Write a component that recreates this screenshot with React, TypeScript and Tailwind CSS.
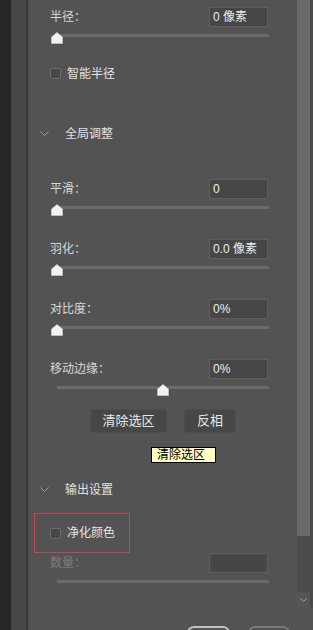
import React from 'react';

const font = { fontFamily: '"Liberation Sans", "Noto Sans CJK SC", sans-serif' };

const Thumb: React.FC = () => (
  <svg width="12" height="12" viewBox="0 0 12 12">
    <path d="M6 0.5 L11.5 5 L11.5 11.5 L0.5 11.5 L0.5 5 Z" fill="#f2f2f2" stroke="#d0d0d0" strokeWidth="0.6" strokeLinejoin="round" />
  </svg>
);

// track runs 212px; thumb offset taken from the value
const Slider: React.FC<{ pct?: number; showThumb?: boolean }> = ({ pct = 0, showThumb = true }) => (
  <div className="relative h-[12px] ml-[1px] mr-[-1px] mt-[5px] shrink-0">
    <div className="absolute left-[6px] right-0 top-[2px] h-[3px] bg-[#6b6b6b]" />
    {showThumb && (
      <div className="absolute top-0 w-[12px] h-[12px]" style={{ left: `${pct * 212}px` }}>
        <Thumb />
      </div>
    )}
  </div>
);

const ValueRow: React.FC<{ label: string; value: string; className?: string; disabled?: boolean }> = ({
  label,
  value,
  className = '',
  disabled,
}) => (
  <div className={`flex items-center justify-between h-[20px] shrink-0 ${className}`}>
    <span className={`text-[12px] leading-none ${disabled ? 'text-[#7c7c7c]' : 'text-[#d8d8d8]'}`}>{label}</span>
    <div
      className={`w-[59px] h-[20px] border flex items-center pl-[3px] text-[12px] leading-none ${
        disabled ? 'border-[#5c5c5c] bg-[#494949] p-[2px]' : 'border-[#5f5f5f] bg-[#464646] text-[#ececec]'
      }`}
    >
      {disabled ? <div className="w-full h-full bg-[#454545]" /> : value}
    </div>
  </div>
);

const Checkbox: React.FC<{ label: string }> = ({ label }) => (
  <div className="flex items-center h-[11px] gap-[6px]">
    <div className="w-[11px] h-[11px] rounded-[2px] border border-[#6c6c6c] bg-[#474747]" />
    <span className="text-[12px] leading-none text-[#e4e4e4]">{label}</span>
  </div>
);

const Section: React.FC<{ title: string; className?: string }> = ({ title, className = '' }) => (
  <div className={`flex items-center h-[16px] ml-[-10px] shrink-0 ${className}`}>
    <svg width="9" height="6" viewBox="0 0 9 6" className="mr-[16px]">
      <polyline points="0.5,0.5 4.5,4.5 8.5,0.5" fill="none" stroke="#9c9c9c" strokeWidth="1" />
    </svg>
    <span className="text-[12px] leading-none text-[#e2e2e2]">{title}</span>
  </div>
);

export default function App() {
  return (
    <div className="flex h-[630px] w-[313px] overflow-hidden bg-[#535353]" style={font}>
      <div className="w-[11px] bg-[#262626]" />
      <div className="w-[15px] bg-[#474747]" />
      <div className="w-[2px] bg-[#393939]" />
      <div className="flex-1 flex flex-col bg-[#535353] border-l border-[#4c4c4c] overflow-hidden">
        <div className="flex h-[608px] shrink-0">
          {/* scrolling content */}
          <div className="flex-1 flex flex-col pl-[21px] pr-[29px] pt-[7px]">
            <ValueRow label="半径：" value="0 像素" />
            <Slider />
            <div className="mt-[24px]">
              <Checkbox label="智能半径" />
            </div>

            <Section title="全局调整" className="mt-[47px]" />

            <ValueRow label="平滑：" value="0" className="mt-[37px]" />
            <Slider />
            <ValueRow label="羽化：" value="0.0 像素" className="mt-[23px]" />
            <Slider />
            <ValueRow label="对比度：" value="0%" className="mt-[23px]" />
            <Slider />
            <ValueRow label="移动边缘：" value="0%" className="mt-[23px]" />
            <Slider pct={0.5} />

            <div className="relative flex mt-[13px] ml-[40px] gap-[17px] shrink-0">
              <button className="w-[77px] h-[24px] rounded-[3px] border border-[#4d4d4d] bg-[#474747] text-[13px] text-[#e6e6e6]">
                清除选区
              </button>
              <button className="w-[52px] h-[24px] rounded-[3px] border border-[#4d4d4d] bg-[#474747] text-[13px] text-[#e6e6e6]">
                反相
              </button>
              <div className="absolute left-[61px] top-[38px] h-[16px] w-[65px] border border-black bg-[#ffffc6] pl-[5px] text-[12px] leading-[14px] text-black">
                清除选区
              </div>
            </div>

            <Section title="输出设置" className="mt-[49px]" />

            <div className="mt-[15px] ml-[-16px] w-[96px] h-[40px] border border-[#c24952] flex items-center pl-[15px] shrink-0">
              <Checkbox label="净化颜色" />
            </div>

            <ValueRow label="数量：" value="" disabled />
            <Slider showThumb={false} />
          </div>

          {/* scrollbar */}
          <div className="w-[16px] flex">
            <div className="w-[13px] flex flex-col">
              <div className="h-[536px] bg-[#6a6a6a]" />
              <div className="flex-1 bg-[#4b4b4b] flex flex-col justify-end">
                <div className="h-[16px] bg-[#555555] flex items-center justify-center">
                  <svg width="7" height="5" viewBox="0 0 7 5">
                    <polyline points="0.5,0.5 3.5,3.5 6.5,0.5" fill="none" stroke="#a8a8a8" strokeWidth="1" />
                  </svg>
                </div>
              </div>
            </div>
            <div className="flex-1 bg-[#4a4a4a]" />
          </div>
        </div>

        {/* footer, buttons cut off at the bottom edge */}
        <div className="flex pt-[18px] pl-[158px] gap-[18px] shrink-0">
          <div className="w-[43px] h-[24px] shrink-0 rounded-[7px] border-2 border-[#c2c2c2]" />
          <div className="w-[42px] h-[24px] shrink-0 rounded-[7px] border-2 border-[#7a7a7a]" />
        </div>
      </div>
    </div>
  );
}
